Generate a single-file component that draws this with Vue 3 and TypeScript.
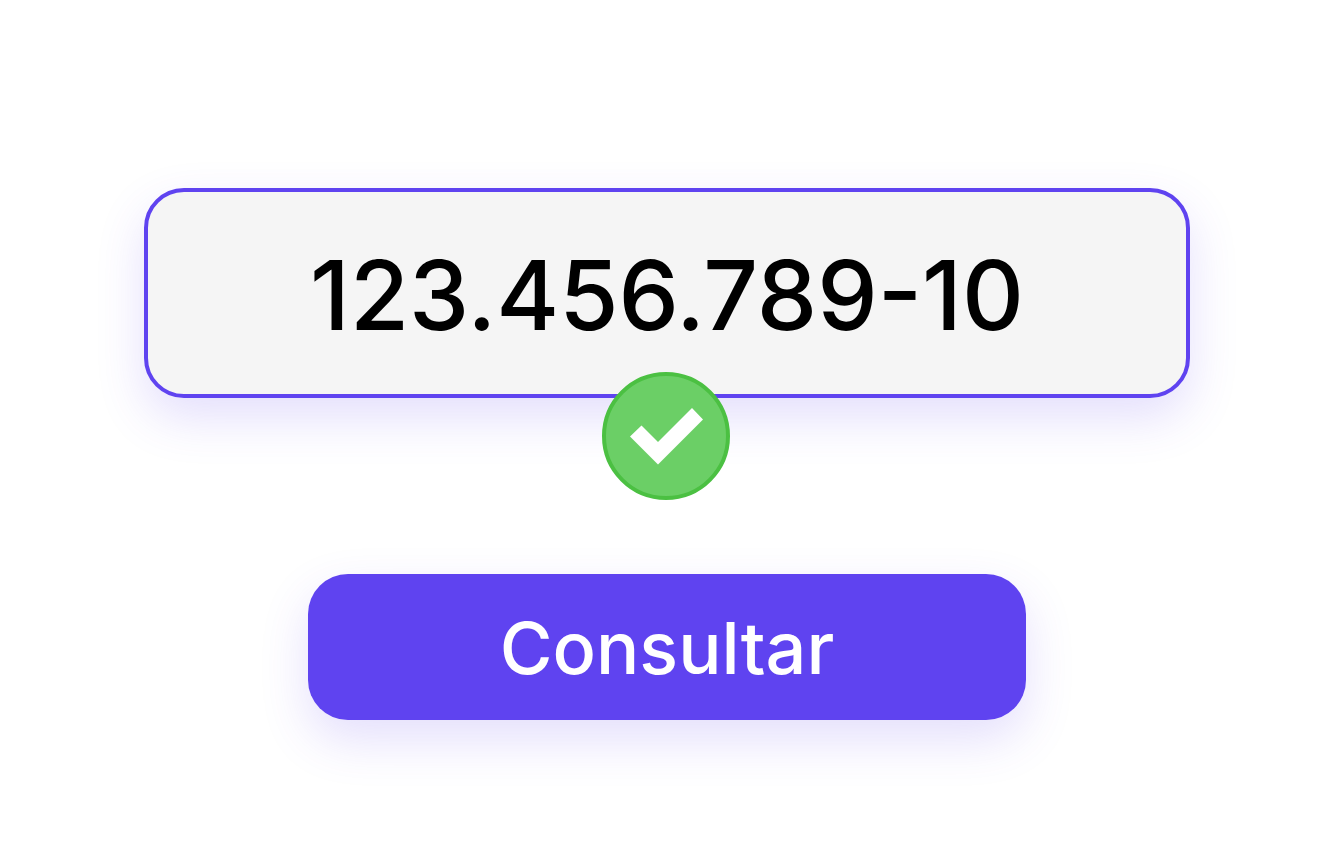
<script setup lang="ts">
import { ref } from 'vue'

const documentNumber = ref<string>('123.456.789-10')
</script>

<template>
  <form class="lookup" @submit.prevent>
    <div class="field">
      <input v-model="documentNumber" class="field-input" type="text" inputmode="numeric" aria-label="CPF" />
      <svg class="badge" viewBox="0 0 128 128" role="img" aria-label="Válido">
        <circle cx="64" cy="64" r="62" fill="#6bcf66" stroke="#4bc042" stroke-width="4" />
        <path d="M28 64.5 39.5 53.5 56 70 90 36 101 47.5 56 92.5Z" fill="#fff" />
      </svg>
    </div>
    <button class="submit" type="submit">Consultar</button>
  </form>
</template>

<style>
body {
  margin: 0;
  background: #fff;
}
</style>

<style scoped>
.lookup {
  display: flex;
  flex-direction: column;
  align-items: center;
  gap: 176px;
  padding: 188px 142px 138px 144px;
  font-family: Inter, "Liberation Sans", sans-serif;
}

.field {
  position: relative;
  width: 100%;
}

.field-input {
  display: block;
  box-sizing: border-box;
  width: 100%;
  margin: 0;
  padding: 45px 40px 41px;
  border: 4px solid #5f43f0;
  border-radius: 40px;
  outline: none;
  background: #f5f5f5;
  box-shadow: 0 20px 48px rgba(95, 67, 240, 0.17);
  color: #000;
  font-family: inherit;
  font-size: 96px;
  font-weight: 500;
  line-height: 116px;
  text-align: center;
}

.badge {
  position: absolute;
  top: 184px;
  left: 50%;
  width: 128px;
  height: 128px;
  margin-left: -65px;
}

.submit {
  box-sizing: border-box;
  width: calc(100% - 328px);
  padding: 30px 40px 28px;
  border: 0;
  border-radius: 40px;
  background: #5f43f0;
  box-shadow: 0 20px 48px rgba(95, 67, 240, 0.17);
  color: #fff;
  font-family: inherit;
  font-size: 72px;
  font-weight: 500;
  line-height: 88px;
  cursor: pointer;
}
</style>
